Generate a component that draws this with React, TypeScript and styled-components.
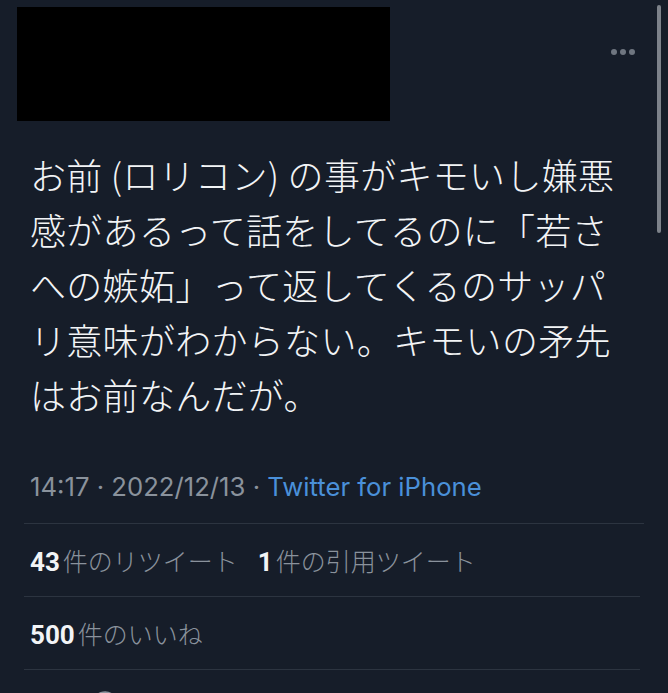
import styled, { createGlobalStyle } from "styled-components";
import { MessageCircle, Repeat2, Heart, Share } from "lucide-react";

const GlobalStyle = createGlobalStyle`
  html, body {
    margin: 0;
    padding: 0;
    height: 100%;
    overflow: hidden;
    background: #161d29;
  }
  body {
    font-family: "Inter", "Roboto", "Noto Sans CJK JP", sans-serif;
    -webkit-font-smoothing: antialiased;
  }
`;

const stats = [
  { count: "43", label: "件のリツイート" },
  { count: "1", label: "件の引用ツイート" },
];

const App = () => {
  return (
    <>
      <GlobalStyle />
      <Page>
        <ScrollThumb />
        <Header>
          <Redacted />
          <MoreButton aria-label="more">
            <Dot />
            <Dot />
            <Dot />
          </MoreButton>
        </Header>
        <TweetText>
          お前 (ロリコン) の事がキモいし嫌悪感があるって話をしてるのに「若さへの嫉妬」って返してくるのサッパリ意味がわからない。キモいの矛先はお前なんだが。
        </TweetText>
        <Meta>
          14:17 · 2022/12/13 · <Source>Twitter for iPhone</Source>
        </Meta>
        <StatRow>
          {stats.map((s) => (
            <Stat key={s.label}>
              <Count>{s.count}</Count>
              <Label>{s.label}</Label>
            </Stat>
          ))}
        </StatRow>
        <StatRow>
          <Stat>
            <Count>500</Count>
            <Label>件のいいね</Label>
          </Stat>
        </StatRow>
        <ActionBar>
          <MessageCircle size={30} strokeWidth={1.8} />
          <Repeat2 size={26} strokeWidth={1.8} />
          <Heart size={26} strokeWidth={1.8} />
          <Share size={26} strokeWidth={1.8} />
        </ActionBar>
      </Page>
    </>
  );
};

export default App;

const Page = styled.div`
  position: relative;
  width: 668px;
  height: 693px;
  overflow: hidden;
  background: #161d29;
`;

const ScrollThumb = styled.div`
  position: absolute;
  top: 5px;
  left: 657px;
  width: 4px;
  height: 228px;
  border-radius: 2px;
  background: #7d828a;
`;

const Header = styled.div`
  display: flex;
  align-items: flex-start;
  justify-content: space-between;
  padding: 7px 33px 0 17px;
`;

const Redacted = styled.div`
  width: 373px;
  height: 114px;
  background: #000;
`;

const MoreButton = styled.button`
  display: flex;
  gap: 3px;
  margin-top: 42px;
  padding: 0;
  background: transparent;
  border: none;
  cursor: pointer;
`;

const Dot = styled.span`
  width: 6px;
  height: 6px;
  border-radius: 50%;
  background: #6f7680;
`;

const TweetText = styled.p`
  margin: 26px 0 0;
  padding: 0 30px;
  font-family: "Noto Sans CJK JP", sans-serif;
  font-weight: 300;
  font-size: 36px;
  line-height: 55px;
  color: #f2f4f6;
  letter-spacing: 0.3px;
`;

const Meta = styled.div`
  margin: 48px 24px 0;
  padding: 0 6px 19px;
  border-bottom: 1px solid #2c3440;
  font-size: 25.7px;
  line-height: 34px;
  color: #8a929c;
`;

const Source = styled.span`
  color: #4a90d9;
`;

const StatRow = styled.div`
  display: flex;
  align-items: center;
  gap: 20px;
  height: 72px;
  margin: 0 28px 0 24px;
  padding: 0 6px;
  border-bottom: 1px solid #2c3440;
`;

const Stat = styled.div`
  display: flex;
  align-items: baseline;
  gap: 3px;
  font-size: 25px;
`;

const Count = styled.span`
  font-family: "Roboto", "Inter", sans-serif;
  font-weight: 700;
  font-size: 26px;
  color: #f2f4f6;
`;

const Label = styled.span`
  font-family: "Noto Sans CJK JP", sans-serif;
  font-weight: 300;
  color: #8a929c;
`;

const ActionBar = styled.div`
  display: flex;
  align-items: center;
  justify-content: space-between;
  padding: 17px 90px 0 90px;
  height: 36px;
  color: #8a929c;
`;
